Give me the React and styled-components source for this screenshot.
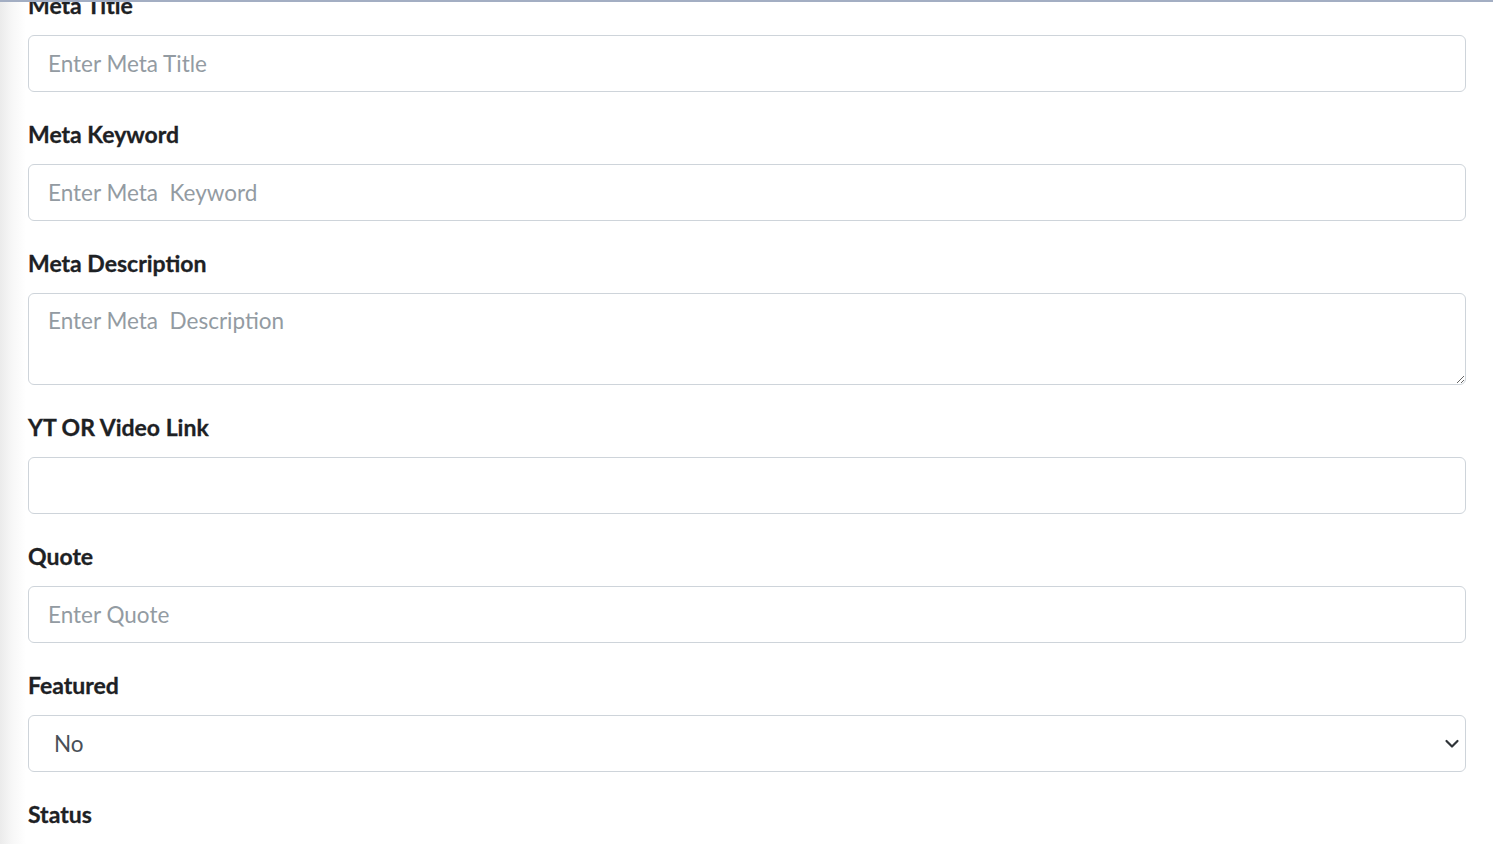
import React, { useState } from 'react';
import styled, { createGlobalStyle } from 'styled-components';

const GlobalStyle = createGlobalStyle`
  html, body {
    margin: 0;
    padding: 0;
    background: #fff;
    overflow: hidden;
  }
  body {
    font-family: "Source Sans Pro", Lato, "Liberation Sans", sans-serif;
    color: #212529;
  }
  * {
    box-sizing: border-box;
  }
`;

const TopLine = styled.div`
  position: fixed;
  top: 0;
  left: 0;
  right: 0;
  height: 2px;
  background: #a3aec3;
  z-index: 10;
`;

const Page = styled.div`
  min-height: 100vh;
  background: linear-gradient(to right, #ebebeb 0px, #f7f7f7 12px, #fff 26px);
`;

const Form = styled.form`
  margin-top: -13px;
  padding: 0 27px 0 28px;
`;

const Group = styled.div`
  margin-bottom: 24px;
`;

const Label = styled.label`
  display: block;
  font-size: 23px;
  line-height: 36px;
  font-weight: 700;
  margin-bottom: 12px;
  color: #1d2124;
  -webkit-text-stroke: 0.3px #1d2124;
`;

const fieldCss = `
  display: block;
  width: 100%;
  font-family: inherit;
  font-size: 22.5px;
  line-height: 36px;
  color: #495057;
  background: #fff;
  border: 1px solid #ced4da;
  border-radius: 6px;
  padding: 9px 18px 9px 19px;
  outline: none;
  &::placeholder {
    color: #939ba2;
    opacity: 1;
  }
`;

const Input = styled.input`
  ${fieldCss}
  height: 57px;
`;

const TextArea = styled.textarea`
  ${fieldCss}
  height: 92px;
  resize: vertical;
`;

const SelectWrap = styled.div`
  position: relative;
`;

const Select = styled.select`
  ${fieldCss}
  height: 57px;
  padding-left: 25px;
  appearance: none;
  -webkit-appearance: none;
`;

const Chevron = styled.svg`
  position: absolute;
  right: 6px;
  top: 50%;
  width: 16px;
  height: 16px;
  margin-top: -8px;
  pointer-events: none;
`;

const fields = [
  { name: 'metaTitle', label: 'Meta Title', placeholder: 'Enter Meta Title' },
  { name: 'metaKeyword', label: 'Meta Keyword', placeholder: 'Enter Meta  Keyword' },
  { name: 'metaDescription', label: 'Meta Description', placeholder: 'Enter Meta  Description', multiline: true },
  { name: 'videoLink', label: 'YT OR Video Link', placeholder: '' },
  { name: 'quote', label: 'Quote', placeholder: 'Enter Quote' },
];

const SelectField = ({ label, name, value, onChange, options }) => (
  <Group>
    <Label htmlFor={name}>{label}</Label>
    <SelectWrap>
      <Select id={name} name={name} value={value} onChange={onChange}>
        {options.map((o) => (
          <option key={o.value} value={o.value}>{o.label}</option>
        ))}
      </Select>
      <Chevron viewBox="0 0 16 16">
        <path d="M2.5 5 L8 10.5 L13.5 5" fill="none" stroke="#2f3438" strokeWidth="2.2" strokeLinecap="round" strokeLinejoin="round" />
      </Chevron>
    </SelectWrap>
  </Group>
);

const App = () => {
  const [data, setData] = useState({
    metaTitle: '',
    metaKeyword: '',
    metaDescription: '',
    videoLink: '',
    quote: '',
    featured: '0',
    status: '1',
  });

  const handleChange = (e) => {
    const { name, value } = e.target;
    setData((prev) => ({ ...prev, [name]: value }));
  };

  return (
    <Page>
      <GlobalStyle />
      <TopLine />
      <Form onSubmit={(e) => e.preventDefault()}>
        {fields.map((f) => (
          <Group key={f.name}>
            <Label htmlFor={f.name}>{f.label}</Label>
            {f.multiline ? (
              <TextArea id={f.name} name={f.name} rows={2} placeholder={f.placeholder} value={data[f.name]} onChange={handleChange} />
            ) : (
              <Input id={f.name} type="text" name={f.name} placeholder={f.placeholder} value={data[f.name]} onChange={handleChange} />
            )}
          </Group>
        ))}
        <SelectField
          label="Featured"
          name="featured"
          value={data.featured}
          onChange={handleChange}
          options={[{ value: '0', label: 'No' }, { value: '1', label: 'Yes' }]}
        />
        <SelectField
          label="Status"
          name="status"
          value={data.status}
          onChange={handleChange}
          options={[{ value: '1', label: 'Active' }, { value: '0', label: 'Inactive' }]}
        />
      </Form>
    </Page>
  );
};

export default App;
